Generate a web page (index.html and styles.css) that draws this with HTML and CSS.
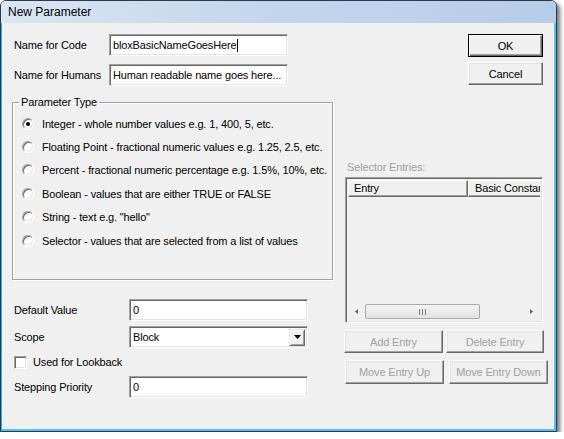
FILE: index.html
```html
<!DOCTYPE html>
<html>
<head>
<meta charset="utf-8">
<link rel="stylesheet" href="styles.css">
</head>
<body>
<div class="window">
  <div class="titlebar">New Parameter</div>
  <div class="client">
    <div class="col-left">
      <div class="row top-row first">
        <span class="lbl lbl-top">Name for Code</span>
        <div class="field field-top"><span>bloxBasicNameGoesHere</span><span class="caret"></span></div>
      </div>
      <div class="row top-row">
        <span class="lbl lbl-top">Name for Humans</span>
        <div class="field field-top">Human readable name goes here...</div>
      </div>
      <fieldset class="group">
        <legend>Parameter Type</legend>
        <div class="radio-row"><span class="radio checked"></span><span>Integer - whole number values e.g. 1, 400, 5, etc.</span></div>
        <div class="radio-row"><span class="radio"></span><span>Floating Point - fractional numeric values e.g. 1.25, 2.5, etc.</span></div>
        <div class="radio-row"><span class="radio"></span><span>Percent - fractional numeric percentage e.g. 1.5%, 10%, etc.</span></div>
        <div class="radio-row"><span class="radio"></span><span>Boolean - values that are either TRUE or FALSE</span></div>
        <div class="radio-row"><span class="radio"></span><span>String - text e.g. "hello"</span></div>
        <div class="radio-row"><span class="radio"></span><span>Selector - values that are selected from a list of values</span></div>
      </fieldset>
      <div class="row bottom-row first-bottom">
        <span class="lbl lbl-bottom">Default Value</span>
        <div class="field field-bottom">0</div>
      </div>
      <div class="row bottom-row scope-row">
        <span class="lbl lbl-bottom">Scope</span>
        <div class="field field-bottom combo">
          <span class="combo-text">Block</span>
          <span class="drop"><svg width="7" height="4" viewBox="0 0 7 4"><path d="M0 0h7L3.5 4z" fill="#000"/></svg></span>
        </div>
      </div>
      <div class="check-row"><span class="checkbox"></span><span>Used for Lookback</span></div>
      <div class="row bottom-row step-row">
        <span class="lbl lbl-bottom">Stepping Priority</span>
        <div class="field field-bottom">0</div>
      </div>
    </div>
    <div class="col-right">
      <div class="btn btn-main btn-default">OK</div>
      <div class="btn btn-main btn-cancel">Cancel</div>
      <div class="sel-label">Selector Entries:</div>
      <div class="listview">
        <div class="lv-header">
          <div class="hcol hcol-entry">Entry</div>
          <div class="hcol hcol-const">Basic Constant</div>
        </div>
        <div class="lv-body"></div>
        <div class="hscroll">
          <span class="arrow"><svg width="3" height="5" viewBox="0 0 3 5"><path d="M3 0v5L0 2.5z" fill="#606060"/></svg></span>
          <div class="track">
            <div class="thumb"><svg width="7" height="6" viewBox="0 0 7 6"><path d="M0.5 0v6M3.5 0v6M6.5 0v6" stroke="#7a7a7a" stroke-width="1"/></svg></div>
          </div>
          <span class="arrow"><svg width="3" height="5" viewBox="0 0 3 5"><path d="M0 0v5L3 2.5z" fill="#606060"/></svg></span>
        </div>
      </div>
      <div class="btn-row row-a">
        <div class="btn disabled btn-add">Add Entry</div>
        <div class="btn disabled btn-del">Delete Entry</div>
      </div>
      <div class="btn-row row-b">
        <div class="btn disabled btn-up">Move Entry Up</div>
        <div class="btn disabled btn-down">Move Entry Down</div>
      </div>
    </div>
  </div>
</div>
</body>
</html>
```
FILE: styles.css
```css
* { box-sizing: border-box; }
html, body { margin: 0; padding: 0; background: #fff; }
body {
  font-family: "Liberation Sans", Arial, sans-serif;
  font-size: 11px;
  letter-spacing: -0.15px;
  color: #000;
}
.window {
  width: 557px;
  height: 432px;
  border: 1px solid #2e3a48;
  border-radius: 6px 6px 0 0;
  box-shadow: 3px 3px 4px rgba(0,0,0,0.55);
  display: flex;
  flex-direction: column;
  overflow: hidden;
  background: #f0f0f0;
}
.titlebar {
  height: 22px;
  flex: none;
  background: linear-gradient(to right, #dbe6f3 0%, #c5d8ee 40%, #b6cde9 100%);
  font-size: 12px;
  letter-spacing: 0;
  line-height: 22px;
  padding-left: 7px;
  color: #000;
}
.client {
  flex: 1;
  display: flex;
  border-left: 1px solid #3aa6e0;
  border-right: 2px solid #52c2ee;
  border-bottom: 2px solid #52c2ee;
  padding-left: 10px;
}
.col-left {
  width: 321px;
  display: flex;
  flex-direction: column;
}
.row { display: flex; align-items: center; }
.top-row { height: 22px; margin-top: 8px; }
.top-row.first { margin-top: 11px; }
.lbl { padding-left: 2px; flex: none; }
.lbl-top { width: 97px; }
.lbl-bottom { width: 117px; }
.field {
  height: 22px;
  background: #fff;
  border: 1px solid;
  border-color: #a0a0a0 #fff #fff #a0a0a0;
  box-shadow: inset 1px 1px 0 #696969, inset -1px -1px 0 #e3e3e3;
  padding-left: 3px;
  display: flex;
  align-items: center;
  white-space: nowrap;
  overflow: hidden;
}
.field-top { width: 179px; }
.field-bottom { width: 179px; }
.caret { width: 1px; height: 13px; background: #000; margin-left: 1px; }

.group {
  margin: 10px 0 0 0;
  padding: 0;
  width: 321px;
  height: 184px;
  border: 1px solid #a0a0a0;
  box-shadow: inset 1px 1px 0 #fff, 1px 1px 0 #fff;
  min-width: 0;
}
.group legend {
  padding: 0 2px;
  margin-left: 6px;
  line-height: 13px;
}
.radio-row {
  display: flex;
  align-items: center;
  height: 23.4px;
  padding-left: 9px;
}
.radio-row:first-of-type { margin-top: 3px; }
.radio {
  width: 12px;
  height: 12px;
  border-radius: 50%;
  background: #fff;
  border: 1px solid;
  border-color: #a0a0a0 #fff #fff #a0a0a0;
  box-shadow: inset 1px 1px 0 #696969, inset -1px -1px 0 #e3e3e3;
  margin-right: 8px;
  flex: none;
  display: flex;
  align-items: center;
  justify-content: center;
}
.radio.checked::after {
  content: "";
  width: 4px;
  height: 4px;
  border-radius: 50%;
  background: #000;
}

.bottom-row { height: 22px; }
.first-bottom { margin-top: 19px; }
.scope-row { margin-top: 5px; height: 22px; }
.combo { padding-right: 2px; justify-content: space-between; }
.drop {
  width: 16px;
  height: 17px;
  background: #f0f0f0;
  border: 1px solid;
  border-color: #e3e3e3 #696969 #696969 #e3e3e3;
  box-shadow: inset 1px 1px 0 #fff, inset -1px -1px 0 #a0a0a0;
  display: flex;
  align-items: center;
  justify-content: center;
}
.check-row {
  display: flex;
  align-items: center;
  height: 14px;
  margin-top: 7px;
  padding-left: 2px;
}
.checkbox {
  width: 13px;
  height: 13px;
  background: #fff;
  border: 1px solid;
  border-color: #a0a0a0 #fff #fff #a0a0a0;
  box-shadow: inset 1px 1px 0 #696969, inset -1px -1px 0 #e3e3e3;
  margin-right: 6px;
}
.step-row { margin-top: 7px; }

.col-right {
  margin-left: 11px;
  width: 204px;
  display: flex;
  flex-direction: column;
}
.btn {
  background: #f0f0f0;
  border: 1px solid;
  border-color: #fff #696969 #696969 #fff;
  box-shadow: inset -1px -1px 0 #a0a0a0, inset 1px 1px 0 #e3e3e3;
  display: flex;
  align-items: center;
  justify-content: center;
  white-space: nowrap;
}
.btn-main { width: 75px; height: 23px; margin-left: 124px; }
.btn-default {
  margin-top: 11px;
  border: 1px solid #000;
  box-shadow: inset 1px 1px 0 #fff, inset -1px -1px 0 #696969, inset -2px -2px 0 #a0a0a0;
}
.btn-cancel { margin-top: 5px; }
.sel-label { margin-top: 76px; color: #a0a0a0; height: 13px; line-height: 13px; padding-left: 3px; }
.listview {
  margin-top: 3px;
  margin-left: 1px;
  width: 198px;
  height: 146px;
  border: 1px solid;
  border-color: #a0a0a0 #fff #fff #a0a0a0;
  box-shadow: inset 1px 1px 0 #696969, inset -1px -1px 0 #e3e3e3;
  padding: 2px 2px 2px 2px;
  display: flex;
  flex-direction: column;
  background: #f0f0f0;
}
.lv-header { display: flex; height: 17px; flex: none; overflow: hidden; }
.hcol {
  height: 17px;
  border: 1px solid;
  border-color: #fff #696969 #696969 #fff;
  box-shadow: inset -1px -1px 0 #a0a0a0;
  padding-left: 5px;
  line-height: 14px;
  white-space: nowrap;
  overflow: hidden;
  flex: none;
}
.hcol-entry { width: 120px; }
.hcol-const { width: 80px; padding-left: 6px; }
.lv-body { flex: 1; }
.hscroll {
  height: 17px;
  flex: none;
  display: flex;
  align-items: center;
  background: #f0f0f0;
}
.arrow { width: 17px; height: 17px; display: flex; align-items: center; justify-content: center; flex: none; }
.track { flex: 1; height: 17px; display: flex; align-items: center; }
.thumb {
  width: 115px;
  height: 15px;
  border: 1px solid #a8a8a8;
  border-radius: 2px;
  background: linear-gradient(to bottom, #f4f4f4, #e2e2e2);
  display: flex;
  align-items: center;
  justify-content: center;
}
.btn-row { display: flex; }
.row-a { margin-top: 7px; }
.row-b { margin-top: 7px; padding-left: 1px; }
.disabled { color: #a0a0a0; }
.btn-add { width: 99px; height: 23px; }
.btn-del { width: 98px; height: 23px; margin-left: 3px; }
.btn-up { width: 99px; height: 24px; }
.btn-down { width: 99px; height: 24px; margin-left: 5px; }
```
